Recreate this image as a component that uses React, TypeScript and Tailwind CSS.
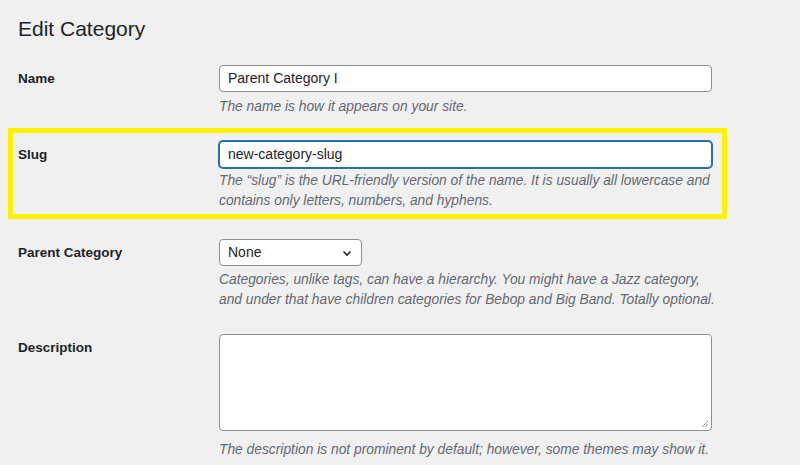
export default function App() {
  const f = { fontFamily: '"Liberation Sans", Arial, sans-serif' };
  return (
    <div className="w-[800px] h-[465px] bg-[#f0f0f1] overflow-hidden text-[#1d2327]" style={f}>
      <h1 className="pl-[18px] pt-[16px] text-[21px] leading-[26px] font-normal">Edit Category</h1>
      <div className="flex mt-[23px] pl-[18px]">
        <div className="w-[201px] pt-[4px] text-[13.5px] font-bold">Name</div>
        <div>
          <div className="w-[493px] h-[27px] bg-white border border-[#8c8f94] rounded-[4px] px-[8px] text-[14px] leading-[25px]">Parent Category I</div>
          <p className="mt-[5px] text-[13.8px] italic text-[#646970] leading-[20px]">The name is how it appears on your site.</p>
        </div>
      </div>
      <div className="mt-[11px] ml-[8px] w-[719px] h-[91px] border-[5px] border-[#fff200] flex pl-[5px] pt-[8px]">
        <div className="w-[201px] pt-[4px] text-[13.5px] font-bold">Slug</div>
        <div>
          <div className="w-[493px] h-[27px] bg-white border border-[#2271b1] shadow-[0_0_0_1px_#2271b1] rounded-[4px] px-[8px] text-[14px] leading-[25px]">new-category-slug</div>
          <p className="mt-[3px] text-[13.8px] italic text-[#646970] leading-[20px] w-[500px]">The “slug” is the URL-friendly version of the name. It is usually all lowercase and contains only letters, numbers, and hyphens.</p>
        </div>
      </div>
      <div className="flex mt-[20px] pl-[18px]">
        <div className="w-[201px] pt-[4px] text-[13.5px] font-bold">Parent Category</div>
        <div>
          <div className="w-[143px] h-[27px] bg-white border border-[#8c8f94] rounded-[4px] pl-[8px] pr-[8px] text-[14px] leading-[25px] flex justify-between items-center">
            <span>None</span>
            <svg width="12" height="12" viewBox="0 0 12 12"><path d="M2.5 4.5 6 8l3.5-3.5" fill="none" stroke="#1d2327" strokeWidth="1.6" /></svg>
          </div>
          <p className="mt-[4px] text-[13.8px] italic text-[#646970] leading-[20px] w-[500px]">Categories, unlike tags, can have a hierarchy. You might have a Jazz category, and under that have children categories for Bebop and Big Band. Totally optional.</p>
        </div>
      </div>
      <div className="flex mt-[24px] pl-[18px]">
        <div className="w-[201px] pt-[4px] text-[13.5px] font-bold">Description</div>
        <div>
          <div className="relative w-[493px] h-[97px] bg-white border border-[#8c8f94] rounded-[4px]">
            <svg className="absolute right-[2px] bottom-[2px]" width="8" height="8" viewBox="0 0 8 8"><path d="M7 1 1 7M7 4 4 7" stroke="#999" strokeWidth="1" /></svg>
          </div>
          <p className="mt-[9px] text-[13.8px] italic text-[#646970] leading-[20px]">The description is not prominent by default; however, some themes may show it.</p>
        </div>
      </div>
    </div>
  );
}
